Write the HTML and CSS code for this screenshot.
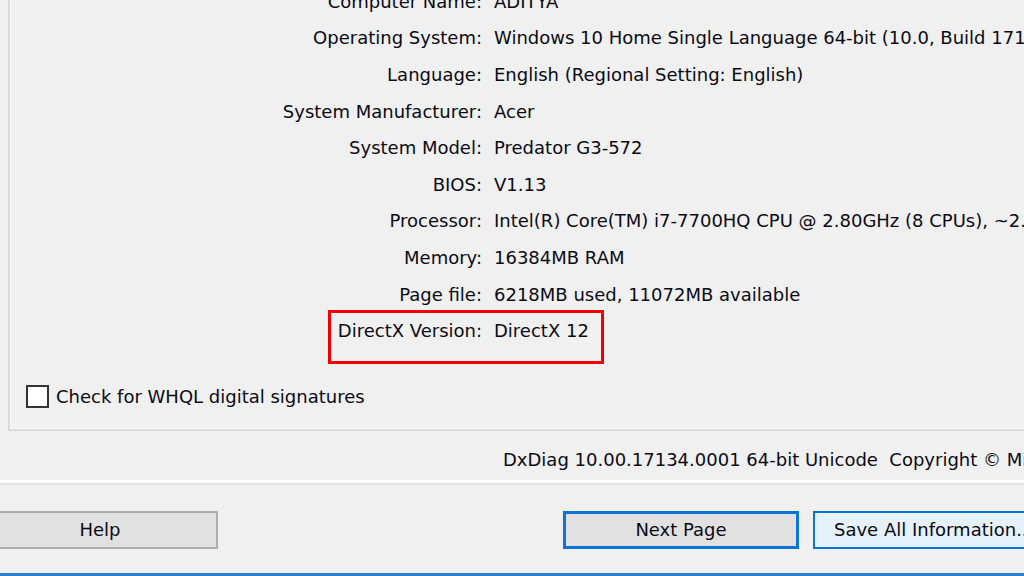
FILE: index.html
```html
<!DOCTYPE html>
<html>
<head>
<meta charset="utf-8">
<link rel="stylesheet" href="styles.css">
</head>
<body>
<div class="window">
  <div class="group">
    <div class="info">
      <div class="row"><span class="label">Computer Name:</span><span class="value">ADITYA</span></div>
      <div class="row"><span class="label">Operating System:</span><span class="value">Windows 10 Home Single Language 64-bit (10.0, Build 17134)</span></div>
      <div class="row"><span class="label">Language:</span><span class="value">English (Regional Setting: English)</span></div>
      <div class="row"><span class="label">System Manufacturer:</span><span class="value">Acer</span></div>
      <div class="row"><span class="label">System Model:</span><span class="value">Predator G3-572</span></div>
      <div class="row"><span class="label">BIOS:</span><span class="value">V1.13</span></div>
      <div class="row"><span class="label">Processor:</span><span class="value">Intel(R) Core(TM) i7-7700HQ CPU @ 2.80GHz (8 CPUs), ~2.8GHz</span></div>
      <div class="row"><span class="label">Memory:</span><span class="value">16384MB RAM</span></div>
      <div class="row"><span class="label">Page file:</span><span class="value">6218MB used, 11072MB available</span></div>
      <div class="row highlighted"><span class="label">DirectX Version:</span><span class="value">DirectX 12</span><span class="redbox"></span></div>
    </div>
    <label class="check"><span class="box"></span><span>Check for WHQL digital signatures</span></label>
  </div>
  <div class="footer-text">DxDiag 10.00.17134.0001 64-bit Unicode&nbsp; Copyright © Microsoft. All rights reserved.</div>
  <div class="sep"></div>
  <div class="buttons">
    <button class="btn help">Help</button>
    <div class="spacer"></div>
    <button class="btn next">Next Page</button>
    <button class="btn save">Save All Information...</button>
  </div>
  <div class="frame-bottom"></div>
</div>
</body>
</html>
```
FILE: styles.css
```css
html, body {
  margin: 0;
  padding: 0;
  background: #f0f0f0;
}
body {
  width: 1024px;
  height: 576px;
  overflow: hidden;
  font-family: "DejaVu Sans", "Liberation Sans", sans-serif;
  font-size: 18px;
  color: #0a0a14;
}
.window {
  width: 1024px;
  height: 576px;
  overflow: hidden;
  display: flex;
  flex-direction: column;
}
.group {
  margin-top: -17px;
  margin-left: 8px;
  border-left: 2px solid #dadada;
  border-bottom: 2px solid #dadada;
  box-shadow: inset 1px 0 0 #fafafa, inset 0 -1px 0 #fafafa;
  padding-bottom: 20px;
  flex: none;
}
.info {
  display: flex;
  flex-direction: column;
}
.row {
  display: grid;
  grid-template-columns: 472px auto;
  column-gap: 12px;
  height: 36.6px;
  align-items: center;
  white-space: nowrap;
  position: relative;
}
.label {
  text-align: right;
}
.redbox {
  position: absolute;
  left: 318px;
  top: -2px;
  width: 270px;
  height: 48px;
  border: 3px solid #f20000;
}
.check {
  display: flex;
  align-items: center;
  gap: 7px;
  margin-top: 36px;
  padding-left: 16px;
  height: 24px;
  white-space: nowrap;
}
.box {
  width: 19px;
  height: 19px;
  border: 2px solid #333;
  background: #fff;
  flex: none;
}
.footer-text {
  margin-top: 18px;
  padding-left: 503px;
  height: 22px;
  line-height: 22px;
  white-space: nowrap;
  flex: none;
}
.sep {
  margin-top: 9px;
  height: 3px;
  background: #fff;
  border-bottom: 2px solid #e2e2e2;
  flex: none;
}
.buttons {
  display: flex;
  margin-top: 26px;
  height: 38px;
  flex: none;
  white-space: nowrap;
}
.btn {
  font-family: inherit;
  font-size: 18px;
  color: #0a0a14;
  height: 38px;
  width: 236px;
  padding: 0;
  flex: none;
  background: #e1e1e1;
  border: 2px solid #adadad;
  white-space: nowrap;
  overflow: visible;
}
.help {
  margin-left: -18px;
}
.spacer {
  flex: none;
  width: 345px;
}
.next {
  border: 3px solid #0a74d6;
}
.save {
  margin-left: 14px;
  background: #e5f1fb;
  border: 2px solid #0a74d6;
  text-align: left;
  padding-left: 19px;
}
.frame-bottom {
  margin-top: auto;
  height: 3px;
  background: #2f7fcd;
  flex: none;
}
```
